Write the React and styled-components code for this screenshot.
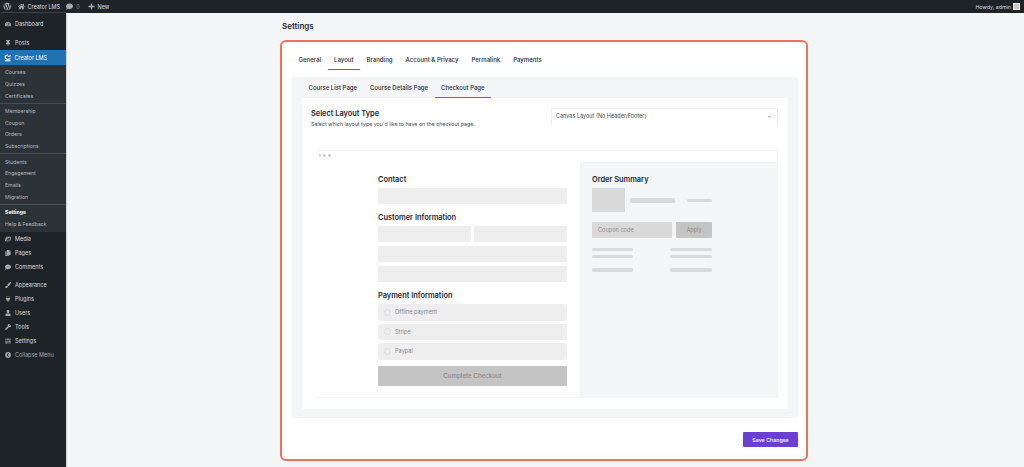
import React from 'react';
import styled, { createGlobalStyle } from 'styled-components';
import { FaWordpress, FaHome, FaComment, FaPlus, FaThumbtack, FaCopy, FaPaintBrush, FaPlug, FaUser, FaWrench, FaSlidersH, FaTachometerAlt, FaChevronCircleLeft, FaImages } from 'react-icons/fa';

const GlobalStyle = createGlobalStyle`
  html, body { margin: 0; padding: 0; height: 100%; background: #f3f5f6; }
  body { font-family: Inter, "Liberation Sans", sans-serif; overflow: hidden; }
  * { box-sizing: border-box; }
`;

const Page = styled.div`
  width: 1024px;
  height: 467px;
  display: flex;
  flex-direction: column;
  overflow: hidden;
`;

const TopBar = styled.div`
  height: 13px;
  background: #1d2327;
  color: #dcdfe2;
  font-size: 5.5px;
  font-weight: 400;
  display: flex;
  align-items: center;
  padding: 0 4px 0 3px;
  flex-shrink: 0;
`;

const TopItem = styled.span`
  display: inline-flex;
  align-items: center;
  gap: 3px;
  margin-right: ${p => p.$gap || 7}px;
  color: ${p => p.$dim ? '#8c9196' : '#dcdfe2'};
  svg { font-size: ${p => p.$icon || 7}px; color: #a7aaad; }
`;

const Howdy = styled.span`
  margin-left: auto;
  display: flex;
  align-items: center;
  gap: 2px;
  font-size: 5.3px;
`;

const Avatar = styled.span`
  width: 7px;
  height: 7px;
  background: #c9c9c9;
  border: 1px solid #e8e8e8;
`;

const Body = styled.div`
  flex: 1;
  display: flex;
  min-height: 0;
`;

const Sidebar = styled.nav`
  width: 66px;
  flex-shrink: 0;
  background: #1d2327;
  padding-top: 4px;
  box-shadow: 1px 0 1px #d5d8da;
`;

const MenuItem = styled.div`
  height: 14px;
  display: flex;
  align-items: center;
  gap: 4.5px;
  padding-left: 4.5px;
  font-size: 5.5px;
  font-weight: 400;
  color: ${p => p.$muted ? '#a7aaad' : '#d9dcdf'};
  background: ${p => p.$active ? '#2271b1' : 'transparent'};
  margin-top: ${p => p.$top || 0}px;
  svg { width: 6px; height: 6px; color: ${p => p.$active ? '#fff' : '#a7aaad'}; flex-shrink: 0; }
  ${p => p.$active && 'color: #fff; height: 15px; gap: 3px; padding-left: 3.5px;'}
`;

const SubMenu = styled.div`
  background: #2c3338;
  padding: 1.5px 0 2.2px;
`;

const SubItem = styled.div`
  height: 11.7px;
  display: flex;
  align-items: center;
  padding-left: 5px;
  font-size: 5.2px;
  color: ${p => p.$current ? '#fff' : '#b4b9be'};
  font-weight: ${p => p.$current ? 700 : 400};
`;

const SubDivider = styled.div`
  height: 1px;
  background: #454b50;
  margin: 1.2px 0 1.5px;
`;

const Main = styled.main`
  flex: 1;
  padding: 7px 216px 0 214px;
`;

const Title = styled.h1`
  margin: 0 0 8px 2px;
  font-size: 8px;
  line-height: 12px;
  font-weight: 600;
  color: #1f2937;
`;

const Card = styled.section`
  height: 421px;
  background: #fff;
  border: 2px solid #ec7356;
  border-radius: 6px;
  padding: 8px 8px 0 10px;
`;

const Tabs = styled.div`
  display: flex;
`;

const Tab = styled.div`
  font-size: ${p => p.$size || 6.05}px;
  font-weight: 500;
  line-height: 10px;
  padding: 5px 6.5px 4px;
  color: #1f2937;
  border-bottom: 1px solid ${p => p.$active ? '#7a52d1' : 'transparent'};
`;

const Panel = styled.div`
  margin-top: 7px;
  height: 341px;
  background: #f4f5f6;
  border-radius: 2px;
  padding: 1px 10px 0;
`;

const WhitePanel = styled.div`
  height: 311px;
  background: #fff;
  padding: 9px 10px 0 9px;
`;

const LayoutRow = styled.div`
  display: flex;
  justify-content: space-between;
  align-items: flex-start;
  height: 43px;
`;

const FieldTitle = styled.h3`
  margin: 2px 0 2px;
  font-size: 7.4px;
  line-height: 9px;
  font-weight: 600;
  color: #1f2937;
`;

const FieldHint = styled.p`
  margin: 0;
  font-size: 5.3px;
  line-height: 8px;
  color: #3f4650;
`;

const SelectBox = styled.div`
  width: 227px;
  height: 18px;
  margin-top: 1px;
  border: 1px solid #eceef0;
  border-bottom: none;
  border-radius: 1px;
  display: flex;
  align-items: center;
  justify-content: space-between;
  padding: 0 5px 3px 4px;
  font-size: 5.5px;
  color: #3f4650;
  svg { width: 5px; height: 5px; }
`;

const Preview = styled.div`
  margin-left: 5px;
  height: 248px;
  border-top: 1px solid #f3f4f5;
  border-right: 1px solid #f3f4f5;
  border-bottom: 1px solid #f5f6f7;
  border-radius: 2px 2px 0 0;
  display: flex;
  flex-direction: column;
`;

const Dots = styled.div`
  display: flex;
  gap: 2.4px;
  height: 11px;
  padding: 3px 0 0 2.5px;
`;

const Dot = styled.i`
  width: 2.6px;
  height: 2.6px;
  border-radius: 50%;
  background: #cfd2d5;
`;

const PreviewBody = styled.div`
  flex: 1;
  display: flex;
`;

const FormColumn = styled.div`
  width: 264px;
  padding: 13px 13px 0 62px;
`;

const SectionHead = styled.h4`
  margin: ${p => p.$top || 0}px 0 4px;
  font-size: 7.4px;
  line-height: 9px;
  font-weight: 600;
  color: #1f2937;
`;

const Field = styled.div`
  height: 16px;
  background: #eeeeee;
  border-radius: 1px;
  margin-bottom: ${p => p.$bottom ?? 0}px;
`;

const FieldPair = styled.div`
  display: grid;
  grid-template-columns: 1fr 1fr;
  gap: 3px;
  margin-bottom: 4px;
`;

const Option = styled.div`
  height: 16.5px;
  background: #eeeeee;
  border-radius: 2px;
  margin-bottom: 3px;
  display: flex;
  align-items: center;
  gap: 4px;
  padding-left: 6px;
  font-size: 5.6px;
  color: #85888c;
`;

const Radio = styled.span`
  width: 7px;
  height: 7px;
  border-radius: 50%;
  border: 0.6px solid #dcdcdc;
`;

const CheckoutButton = styled.div`
  height: 20px;
  margin-top: 6px;
  background: #c4c4c4;
  border-radius: 1px;
  display: flex;
  align-items: center;
  justify-content: center;
  font-size: 6.2px;
  font-weight: 500;
  color: #8b8b8b;
`;

const SummaryColumn = styled.div`
  flex: 1;
  background: #f3f5f6;
  padding: 13px 12px 0;
`;

const SummaryRow = styled.div`
  display: flex;
  align-items: center;
  justify-content: ${p => p.$justify || 'flex-start'};
  width: 120px;
  margin-top: ${p => p.$top || 0}px;
`;

const Thumb = styled.div`
  width: 33px;
  height: 24px;
  background: #d9d9d9;
  margin-right: 5px;
`;

const Bar = styled.div`
  width: ${p => p.$w}px;
  height: ${p => p.$h || 3}px;
  border-radius: 1.5px;
  background: #d9d9d9;
  margin-left: ${p => p.$left || 0}px;
`;

const Coupon = styled.div`
  width: 80px;
  height: 16px;
  background: #d9d9d9;
  border-radius: 1px;
  display: flex;
  align-items: center;
  padding-left: 6px;
  font-size: 5.6px;
  color: #8d8d8d;
`;

const ApplyButton = styled.div`
  width: 36px;
  height: 16px;
  margin-left: 4px;
  background: #c4c4c4;
  border-radius: 1px;
  display: flex;
  align-items: center;
  justify-content: center;
  font-size: 5.6px;
  color: #8b8b8b;
`;

const Footer = styled.div`
  display: flex;
  justify-content: flex-end;
  margin-top: 14px;
`;

const SaveButton = styled.button`
  width: 55px;
  height: 15px;
  border: none;
  border-radius: 1px;
  background: #6b3fd4;
  color: #fff;
  font-family: inherit;
  font-size: 5.3px;
  font-weight: 500;
  padding: 0;
`;

function CreatorIcon() {
  return (
    <svg viewBox="0 0 16 16" style={{ width: 8, height: 8 }}>
      <path d="M8 2 C4.5 2 2.5 4 2.5 6.5 C2.5 9 4.5 10.5 8 10.5 L13 9.5 M8 5 L14 3.5" fill="none" stroke="#fff" strokeWidth="2.4" />
      <path d="M2.5 13.5 H13" stroke="#fff" strokeWidth="2.2" />
    </svg>
  );
}

function Chevron() {
  return (
    <svg viewBox="0 0 10 10"><path d="M2.5 4 L5 6.5 L7.5 4" fill="none" stroke="#3f4650" strokeWidth="1.2" /></svg>
  );
}

const subGroups = [
  ['Courses', 'Quizzes', 'Certificates'],
  ['Membership', 'Coupon', 'Orders', 'Subscriptions'],
  ['Students', 'Engagement', 'Emails', 'Migration'],
  ['Settings', 'Help & Feedback'],
];

export default function App() {
  return (
    <Page>
      <GlobalStyle />
      <TopBar>
        <TopItem $icon={8.5} $gap={6}><FaWordpress /></TopItem>
        <TopItem $gap={6}><FaHome />Creator LMS</TopItem>
        <TopItem $gap={8} $dim><FaComment />0</TopItem>
        <TopItem><FaPlus />New</TopItem>
        <Howdy>Howdy, admin <Avatar /></Howdy>
      </TopBar>
      <Body>
        <Sidebar>
          <MenuItem><FaTachometerAlt />Dashboard</MenuItem>
          <MenuItem $top={5}><FaThumbtack />Posts</MenuItem>
          <MenuItem $active><CreatorIcon />Creator LMS</MenuItem>
          <SubMenu>
            {subGroups.map((group, i) => (
              <React.Fragment key={i}>
                {i > 0 && <SubDivider />}
                {group.map(name => (
                  <SubItem key={name} $current={i === 3 && name === 'Settings'}>{name}</SubItem>
                ))}
              </React.Fragment>
            ))}
          </SubMenu>
          <MenuItem><FaImages />Media</MenuItem>
          <MenuItem><FaCopy />Pages</MenuItem>
          <MenuItem><FaComment />Comments</MenuItem>
          <MenuItem $top={4.5}><FaPaintBrush />Appearance</MenuItem>
          <MenuItem><FaPlug />Plugins</MenuItem>
          <MenuItem><FaUser />Users</MenuItem>
          <MenuItem><FaWrench />Tools</MenuItem>
          <MenuItem><FaSlidersH />Settings</MenuItem>
          <MenuItem $muted><FaChevronCircleLeft />Collapse Menu</MenuItem>
        </Sidebar>
        <Main>
          <Title>Settings</Title>
          <Card>
            <Tabs>
              <Tab>General</Tab>
              <Tab $active>Layout</Tab>
              <Tab>Branding</Tab>
              <Tab>Account &amp; Privacy</Tab>
              <Tab>Permalink</Tab>
              <Tab>Payments</Tab>
            </Tabs>
            <Panel>
              <Tabs>
                <Tab $size={6}>Course List Page</Tab>
                <Tab $size={6}>Course Details Page</Tab>
                <Tab $size={6} $active>Checkout Page</Tab>
              </Tabs>
              <WhitePanel>
                <LayoutRow>
                  <div>
                    <FieldTitle>Select Layout Type</FieldTitle>
                    <FieldHint>Select which layout type you'd like to have on the checkout page.</FieldHint>
                  </div>
                  <SelectBox>
                    Canvas Layout (No Header/Footer)
                    <Chevron />
                  </SelectBox>
                </LayoutRow>
                <Preview>
                  <Dots><Dot /><Dot /><Dot /></Dots>
                  <PreviewBody>
                    <FormColumn>
                      <SectionHead>Contact</SectionHead>
                      <Field />
                      <SectionHead $top={9}>Customer Information</SectionHead>
                      <FieldPair><Field /><Field /></FieldPair>
                      <Field $bottom={3.5} />
                      <Field />
                      <SectionHead $top={9.5}>Payment Information</SectionHead>
                      <Option><Radio />Offline payment</Option>
                      <Option><Radio />Stripe</Option>
                      <Option><Radio />Paypal</Option>
                      <CheckoutButton>Complete Checkout</CheckoutButton>
                    </FormColumn>
                    <SummaryColumn>
                      <SectionHead>Order Summary</SectionHead>
                      <SummaryRow>
                        <Thumb />
                        <Bar $w={45} $h={5} />
                        <Bar $w={25} $left={12} />
                      </SummaryRow>
                      <SummaryRow $top={10}>
                        <Coupon>Coupon code</Coupon>
                        <ApplyButton>Apply</ApplyButton>
                      </SummaryRow>
                      <SummaryRow $top={10} $justify="space-between"><Bar $w={41} /><Bar $w={42} /></SummaryRow>
                      <SummaryRow $top={4} $justify="space-between"><Bar $w={41} /><Bar $w={42} /></SummaryRow>
                      <SummaryRow $top={10} $justify="space-between"><Bar $w={41} $h={4} /><Bar $w={42} $h={4} /></SummaryRow>
                    </SummaryColumn>
                  </PreviewBody>
                </Preview>
              </WhitePanel>
            </Panel>
            <Footer><SaveButton>Save Changes</SaveButton></Footer>
          </Card>
        </Main>
      </Body>
    </Page>
  );
}
